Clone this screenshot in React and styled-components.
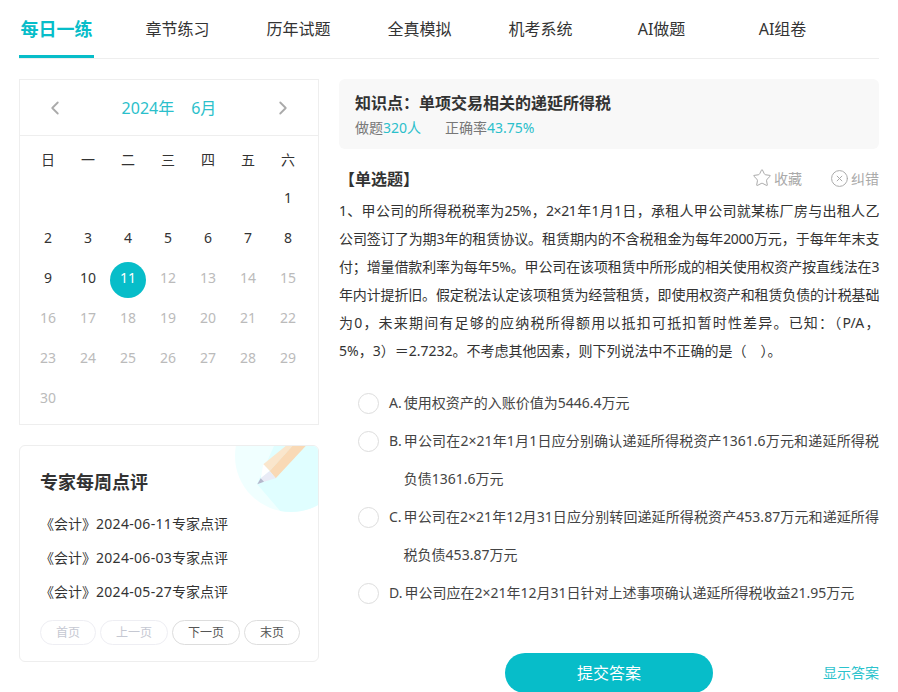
import styled, { createGlobalStyle } from 'styled-components'
import { ChevronLeft, ChevronRight, Star, CircleX } from 'lucide-react'

const tabs = ['每日一练', '章节练习', '历年试题', '全真模拟', '机考系统', 'AI做题', 'AI组卷']
const weekDays = ['日', '一', '二', '三', '四', '五', '六']
const reviews = ['2024-06-11', '2024-06-03', '2024-05-27']
const pager = [
  { label: '首页', off: true, w: 56 },
  { label: '上一页', off: true, w: 68 },
  { label: '下一页', w: 68 },
  { label: '末页', w: 56 },
]
const questionLines = [
  '1、甲公司的所得税税率为25%，2×21年1月1日，承租人甲公司就某栋厂房与出租人乙',
  '公司签订了为期3年的租赁协议。租赁期内的不含税租金为每年2000万元，于每年年末支',
  '付；增量借款利率为每年5%。甲公司在该项租赁中所形成的相关使用权资产按直线法在3',
  '年内计提折旧。假定税法认定该项租赁为经营租赁，即使用权资产和租赁负债的计税基础',
  '为0，未来期间有足够的应纳税所得额用以抵扣可抵扣暂时性差异。已知：（P/A，',
  '5%，3）＝2.7232。不考虑其他因素，则下列说法中不正确的是（　）。',
]
const options = [
  { key: 'A.', text: '使用权资产的入账价值为5446.4万元' },
  { key: 'B.', text: '甲公司在2×21年1月1日应分别确认递延所得税资产1361.6万元和递延所得税负债1361.6万元' },
  { key: 'C.', text: '甲公司在2×21年12月31日应分别转回递延所得税资产453.87万元和递延所得税负债453.87万元' },
  { key: 'D.', text: '甲公司应在2×21年12月31日针对上述事项确认递延所得税收益21.95万元' },
]

const App = () => {
  const days = []
  for (let i = 0; i < 6; i++) days.push(null)
  for (let d = 1; d <= 30; d++) days.push(d)

  return (
    <Page>
      <GlobalStyle />
      <Tabs>
        {tabs.map((t, i) => (
          <Tab key={t} $active={i === 0}>{t}</Tab>
        ))}
      </Tabs>
      <Main>
        <LeftCol>
          <Calendar>
            <CalHead>
              <ChevronLeft size={22} color="#aaa" />
              <CalTitle><span>2024年</span><span>6月</span></CalTitle>
              <ChevronRight size={22} color="#aaa" />
            </CalHead>
            <CalGrid>
              {weekDays.map((d) => <WeekDay key={d}>{d}</WeekDay>)}
              {days.map((d, i) => (
                <Day key={i} $past={d !== null && d <= 10} $today={d === 11}>
                  {d !== null && <span>{d}</span>}
                </Day>
              ))}
            </CalGrid>
          </Calendar>
          <ReviewCard>
            <Pencil viewBox="0 0 84 66" aria-hidden="true">
              <defs>
                <clipPath id="blob"><circle cx="57" cy="10" r="56" /></clipPath>
              </defs>
              <circle cx="57" cy="10" r="56" fill="#f0ffff" />
              <path d="M23 38L47 66H84V0H40Z" fill="#e0feff" clipPath="url(#blob)" />
              <path d="M29.3 18.3L51.7 0H58.3L35.7 25Z" fill="#fae6cc" />
              <path d="M58.3 0H71.7L41.7 32.3L35.7 25Z" fill="#f9d9b5" />
              <path d="M29.3 18.3L35.7 25L26.7 32.3Z" fill="#fff" />
              <path d="M35.7 25L41.7 32.3L30 35.7L26.7 32.3Z" fill="#e9ebf6" />
              <path d="M23.3 38.3L26.7 32.3L30 35.7Z" fill="#b5b8cc" />
            </Pencil>
            <ReviewTitle>专家每周点评</ReviewTitle>
            <ReviewList>
              {reviews.map((r) => (
                <ReviewItem key={r}>《会计》<ReviewDate>{r}</ReviewDate>专家点评</ReviewItem>
              ))}
            </ReviewList>
            <Pager>
              {pager.map((p) => (
                <PageBtn key={p.label} $off={p.off} $w={p.w}>{p.label}</PageBtn>
              ))}
            </Pager>
          </ReviewCard>
        </LeftCol>

        <RightCol>
          <TopicBox>
            <TopicTitle>知识点：单项交易相关的递延所得税</TopicTitle>
            <TopicStats>
              <span>做题<Accent>320人</Accent></span>
              <span>正确率<Accent>43.75%</Accent></span>
            </TopicStats>
          </TopicBox>
          <QuestionHead>
            <QuestionType>【单选题】</QuestionType>
            <Actions>
              <Action><Star size={20} strokeWidth={1.2} />收藏</Action>
              <Action><CircleX size={19} strokeWidth={1.25} />纠错</Action>
            </Actions>
          </QuestionHead>
          <Question>
            {questionLines.map((line, i) => (
              <QuestionLine key={i} $last={i === questionLines.length - 1}>{line}</QuestionLine>
            ))}
          </Question>
          <Options>
            {options.map((o) => (
              <Option key={o.key}>
                <Radio />
                <OptionKey>{o.key}</OptionKey>
                <OptionText>{o.text}</OptionText>
              </Option>
            ))}
          </Options>
          <Footer>
            <Submit>提交答案</Submit>
            <ShowAnswer>显示答案</ShowAnswer>
          </Footer>
        </RightCol>
      </Main>
    </Page>
  )
}

export default App

const GlobalStyle = createGlobalStyle`
  html, body {
    margin: 0;
    height: 100%;
    overflow: hidden;
    background: #fff;
  }
  body {
    font-family: "Noto Sans", "Noto Sans CJK SC", sans-serif;
    color: #333;
  }
  * {
    box-sizing: border-box;
  }
`

const Page = styled.div`
  width: 898px;
  padding: 0 19px;
`

const Tabs = styled.div`
  display: flex;
  gap: 46px;
  height: 59px;
  width: 860px;
  border-bottom: 1px solid #eee;
`

const Tab = styled.div`
  width: 75px;
  height: 58px;
  flex: none;
  text-align: center;
  white-space: nowrap;
  line-height: 58px;
  font-size: ${(p) => (p.$active ? '18px' : '16px')};
  font-weight: ${(p) => (p.$active ? 700 : 400)};
  color: ${(p) => (p.$active ? '#07bdc9' : '#333')};
  border-bottom: ${(p) => (p.$active ? '3px solid #07bdc9' : 'none')};
`

const Main = styled.div`
  display: flex;
  gap: 20px;
  margin-top: 20px;
`

const LeftCol = styled.div`
  width: 300px;
  flex: none;
  display: flex;
  flex-direction: column;
  gap: 20px;
`

const Calendar = styled.div`
  border: 1px solid #eee;
  height: 346px;
`

const CalHead = styled.div`
  height: 56px;
  border-bottom: 1px solid #eee;
  display: flex;
  align-items: center;
  justify-content: space-between;
  padding: 0 24px;
`

const CalTitle = styled.div`
  display: flex;
  gap: 17px;
  font-size: 16px;
  line-height: 20px;
  color: #2bbfcb;
`

const CalGrid = styled.div`
  display: grid;
  grid-template-columns: repeat(7, 40px);
  grid-template-rows: 38px;
  grid-auto-rows: 40px;
  padding: 4px 8px 0;
`

const WeekDay = styled.div`
  display: flex;
  align-items: center;
  justify-content: center;
  font-size: 14px;
  color: #333;
`

const Day = styled.div`
  display: flex;
  align-items: flex-end;
  justify-content: center;
  font-size: 14px;
  color: ${(p) => (p.$today ? '#fff' : p.$past ? '#333' : '#bbb')};

  span {
    width: 36px;
    height: 36px;
    line-height: 32px;
    text-align: center;
    border-radius: 50%;
    background: ${(p) => (p.$today ? '#07bdc9' : 'transparent')};
  }
`

const ReviewCard = styled.div`
  position: relative;
  height: 217px;
  border: 1px solid #eee;
  border-radius: 6px;
  padding: 22px 20px 0;
  overflow: hidden;
`

const Pencil = styled.svg`
  position: absolute;
  top: 0;
  right: 0;
  width: 84px;
  height: 66px;
`

const ReviewTitle = styled.div`
  position: relative;
  font-size: 18px;
  font-weight: 700;
  line-height: 28px;
  color: #333;
`

const ReviewList = styled.div`
  margin-top: 11px;
`

const ReviewItem = styled.div`
  font-size: 14px;
  height: 34px;
  line-height: 34px;
  color: #333;
`

const ReviewDate = styled.span`
  letter-spacing: 0.3px;
`

const Pager = styled.div`
  display: flex;
  gap: 4px;
  margin-top: 11px;
`

const PageBtn = styled.div`
  width: ${(p) => p.$w}px;
  flex: none;
  height: 25px;
  line-height: 23px;
  text-align: center;
  font-size: 12px;
  border-radius: 13px;
  border: 1px solid ${(p) => (p.$off ? '#eeeef3' : '#ddd')};
  color: ${(p) => (p.$off ? '#c5c8d2' : '#555')};
`

const RightCol = styled.div`
  width: 540px;
  flex: none;
`

const TopicBox = styled.div`
  height: 70px;
  background: #f8f8f8;
  border-radius: 6px;
  padding: 10px 16px 0;
`

const TopicTitle = styled.div`
  font-size: 16px;
  font-weight: 700;
  line-height: 28px;
  color: #333;
`

const TopicStats = styled.div`
  display: flex;
  gap: 24px;
  font-size: 14px;
  line-height: 22px;
  color: #777;
`

const Accent = styled.span`
  color: #2bbfcb;
`

const QuestionHead = styled.div`
  display: flex;
  align-items: center;
  justify-content: space-between;
  margin-top: 15px;
  height: 28px;
`

const QuestionType = styled.div`
  font-size: 16px;
  font-weight: 700;
  color: #333;
`

const Actions = styled.div`
  display: flex;
  gap: 28px;
`

const Action = styled.div`
  display: flex;
  align-items: center;
  gap: 2px;
  font-size: 14px;
  color: #aaa;
`

const Question = styled.div`
  margin-top: 5px;
  font-size: 14px;
  line-height: 28px;
  color: #333;
`

const QuestionLine = styled.div`
  letter-spacing: ${(p) => (p.$last ? '0' : '-0.4px')};
  text-align: justify;
  text-align-last: ${(p) => (p.$last ? 'left' : 'justify')};
`

const Options = styled.div`
  margin-top: 19px;
`

const Option = styled.div`
  display: flex;
  font-size: 14px;
  line-height: 38px;
  color: #444;
  padding-left: 19px;
`

const Radio = styled.div`
  width: 21px;
  height: 21px;
  flex: none;
  margin: 9px 10px 0 0;
  border-radius: 50%;
  border: 1px solid #ddd;
`

const OptionKey = styled.div`
  flex: none;
  margin-right: 2px;
`

const OptionText = styled.div`
  flex: 1;
  text-align: justify;
`

const Footer = styled.div`
  position: relative;
  display: flex;
  justify-content: flex-end;
  align-items: center;
  margin-top: 41px;
`

const Submit = styled.div`
  position: absolute;
  left: 166px;
  top: 0;
  width: 208px;
  height: 40px;
  line-height: 40px;
  text-align: center;
  border-radius: 20px;
  background: #07bdc9;
  color: #fff;
  font-size: 16px;
`

const ShowAnswer = styled.div`
  font-size: 14px;
  line-height: 40px;
  color: #2bc3cd;
`
